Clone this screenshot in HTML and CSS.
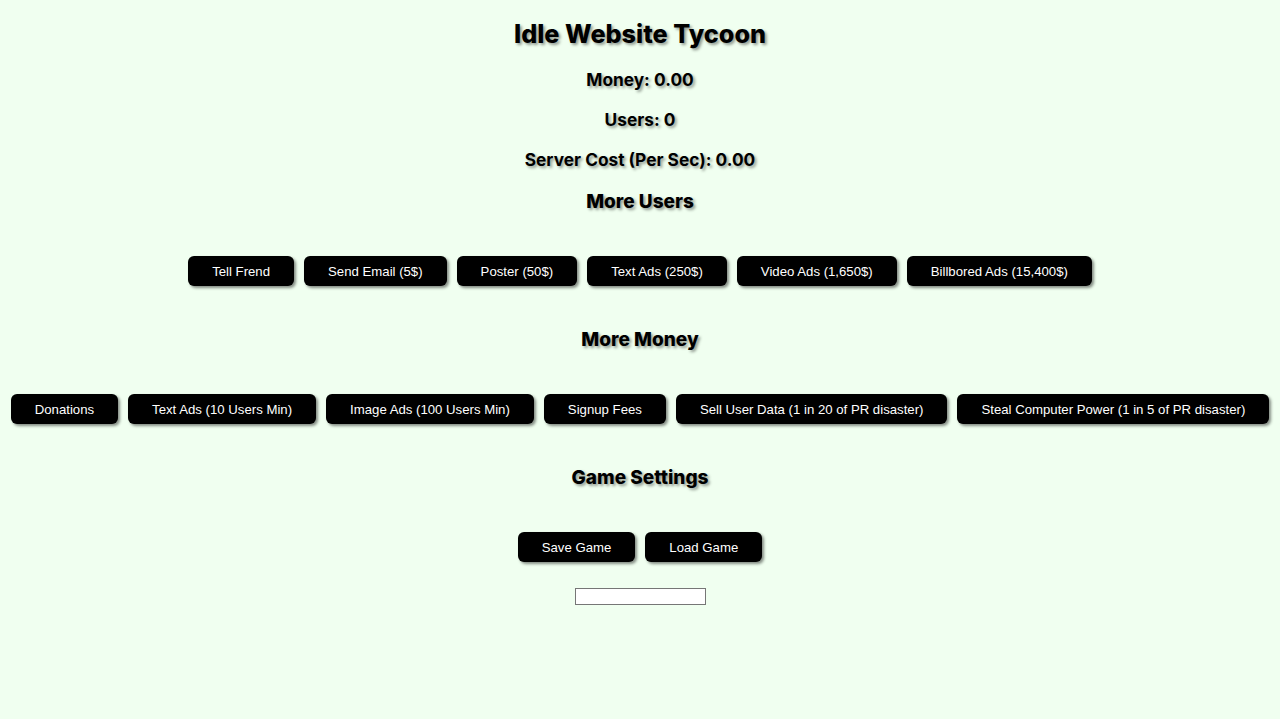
FILE: index.html
```html
<!DOCTYPE html>
<html>
<head>
<meta charset="utf-8">
<title>Idle Website Tycoon</title>
<link rel="stylesheet" href="styles.css">
</head>
<body>
<main class="game">
  <h1 class="title">Idle Website Tycoon</h1>
  <p class="stat">Money: 0.00</p>
  <p class="stat">Users: 0</p>
  <p class="stat">Server Cost (Per Sec): 0.00</p>

  <h2 class="section">More Users</h2>
  <div class="row">
    <button class="btn">Tell Frend</button>
    <button class="btn">Send Email (5$)</button>
    <button class="btn">Poster (50$)</button>
    <button class="btn">Text Ads (250$)</button>
    <button class="btn">Video Ads (1,650$)</button>
    <button class="btn">Billbored Ads (15,400$)</button>
  </div>

  <h2 class="section">More Money</h2>
  <div class="row">
    <button class="btn">Donations</button>
    <button class="btn">Text Ads (10 Users Min)</button>
    <button class="btn">Image Ads (100 Users Min)</button>
    <button class="btn">Signup Fees</button>
    <button class="btn">Sell User Data (1 in 20 of PR disaster)</button>
    <button class="btn">Steal Computer Power (1 in 5 of PR disaster)</button>
  </div>

  <h2 class="section">Game Settings</h2>
  <div class="row">
    <button class="btn">Save Game</button>
    <button class="btn">Load Game</button>
  </div>
  <div class="save-row">
    <input class="save-input" type="text">
  </div>
</main>
</body>
</html>
```
FILE: styles.css
```css
html, body {
  margin: 0;
  padding: 0;
  background: #f0fff0;
}
.game {
  padding-top: 14px;
  font-family: Inter, "Noto Sans", sans-serif;
  color: #000;
  text-align: center;
}
.title {
  margin: 0 0 6px;
  font-size: 25.2px;
  line-height: 40px;
  font-weight: 800;
  text-shadow: 2px 2px 3px rgba(0,0,0,0.4);
}
.stat {
  margin: 0;
  font-size: 17.3px;
  line-height: 40px;
  font-weight: 700;
  text-shadow: 2px 2px 3px rgba(0,0,0,0.4);
}
.section {
  margin: 2px 0 34px;
  font-size: 19px;
  line-height: 40px;
  font-weight: 800;
  text-shadow: 2px 2px 3px rgba(0,0,0,0.4);
}
.row {
  display: flex;
  justify-content: center;
  gap: 10px;
  margin-bottom: 34px;
}
.btn {
  flex-shrink: 0;
  white-space: nowrap;
  height: 30px;
  padding: 0 24px;
  border: none;
  border-radius: 6px;
  background: #000;
  color: #fff;
  font-family: "Liberation Sans", Arial, sans-serif;
  font-size: 13.2px;
  box-shadow: 2px 2px 3px rgba(0,0,0,0.45);
}
.row + .save-row {
  margin-top: -8px;
}
.save-row {
  display: flex;
  justify-content: center;
}
.save-input {
  box-sizing: border-box;
  width: 131px;
  height: 17px;
  margin: 0;
  padding: 0;
  border: 1px solid #767676;
  background: #fff;
}
```
